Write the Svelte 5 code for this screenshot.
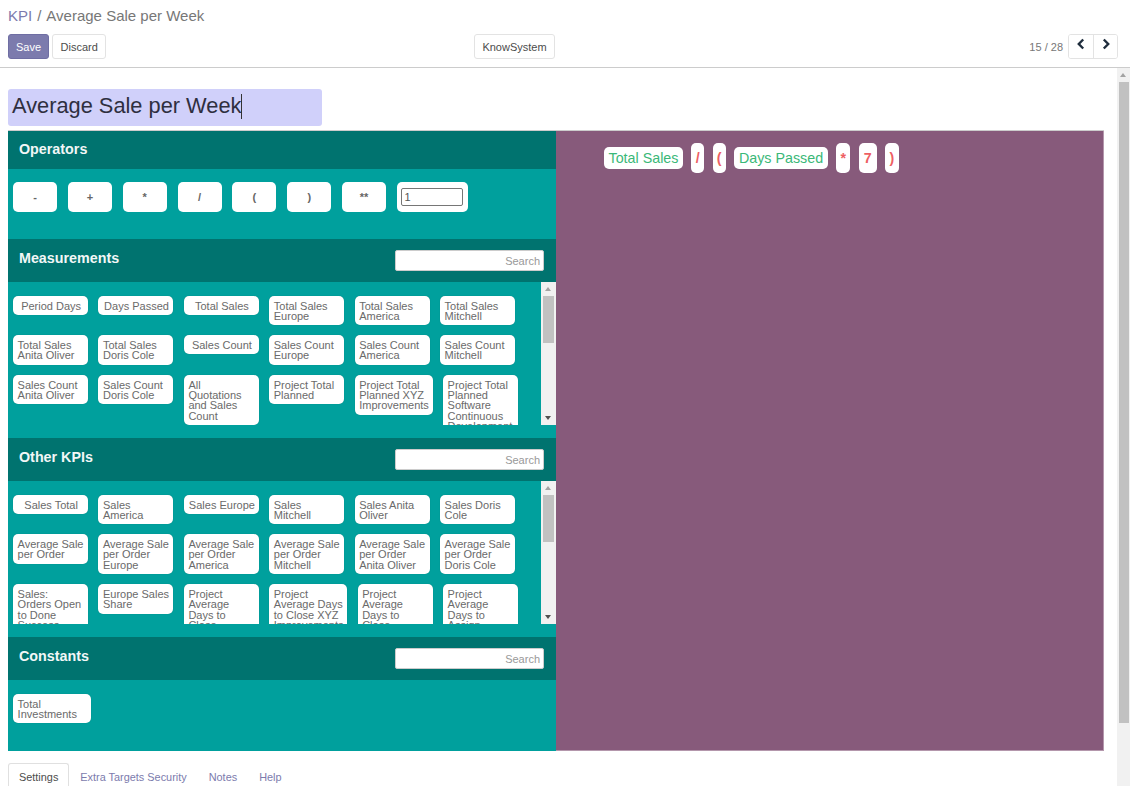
<script>
  const operators = ['-', '+', '*', '/', '(', ')', '**'];

  // wide = chip stretched by a long word in the original
  const measurements = [
    { t: 'Period Days' }, { t: 'Days Passed' }, { t: 'Total Sales' },
    { t: 'Total Sales Europe' }, { t: 'Total Sales America' }, { t: 'Total Sales Mitchell' },
    { t: 'Total Sales Anita Oliver' }, { t: 'Total Sales Doris Cole' }, { t: 'Sales Count' },
    { t: 'Sales Count Europe' }, { t: 'Sales Count America' }, { t: 'Sales Count Mitchell' },
    { t: 'Sales Count Anita Oliver' }, { t: 'Sales Count Doris Cole' }, { t: 'All Quotations and Sales Count' },
    { t: 'Project Total Planned' }, { t: 'Project Total Planned XYZ Improvements', wide: true },
    { t: 'Project Total Planned Software Continuous Development' }
  ];

  const otherKpis = [
    { t: 'Sales Total' }, { t: 'Sales America' }, { t: 'Sales Europe' },
    { t: 'Sales Mitchell' }, { t: 'Sales Anita Oliver' }, { t: 'Sales Doris Cole' },
    { t: 'Average Sale per Order' }, { t: 'Average Sale per Order Europe' }, { t: 'Average Sale per Order America' },
    { t: 'Average Sale per Order Mitchell' }, { t: 'Average Sale per Order Anita Oliver' }, { t: 'Average Sale per Order Doris Cole' },
    { t: 'Sales: Orders Open to Done Success' }, { t: 'Europe Sales Share' }, { t: 'Project Average Days to Close' },
    { t: 'Project Average Days to Close XYZ Improvements', wide: true },
    { t: 'Project Average Days to Close Software' }, { t: 'Project Average Days to Assign' }
  ];

  const formula = [
    { t: 'Total Sales', kind: 'operand' },
    { t: '/', kind: 'op' },
    { t: '(', kind: 'op' },
    { t: 'Days Passed', kind: 'operand' },
    { t: '*', kind: 'op' },
    { t: '7', kind: 'op num' },
    { t: ')', kind: 'op' }
  ];

  const tabs = ['Settings', 'Extra Targets Security', 'Notes', 'Help'];
</script>

{#snippet scrollbar(cls)}
  <div class="sbar {cls}">
    <i class="arrow up"></i>
    <div class="thumb"></div>
    <i class="arrow down"></i>
  </div>
{/snippet}

{#snippet chips(list)}
  <div class="list">
    <div class="chips">
      {#each list as c}
        <div class="chip" class:wide={c.wide}><span>{c.t}</span></div>
      {/each}
    </div>
    {@render scrollbar('small')}
  </div>
{/snippet}

<div class="page">
  <header class="control">
    <div class="crumbs"><a href="#kpi">KPI</a><span class="sep">/</span><span>Average Sale per Week</span></div>
    <div class="actions">
      <div class="left">
        <button class="btn primary">Save</button>
        <button class="btn">Discard</button>
      </div>
      <button class="btn know">KnowSystem</button>
      <div class="pager">
        <span class="count">15 / 28</span>
        <div class="pager-btns">
          <button aria-label="Previous">
            <svg width="10" height="12" viewBox="0 0 10 12"><path d="M7.2 1.5 2.8 6l4.4 4.5" fill="none" stroke="#1f2d3d" stroke-width="2.4" /></svg>
          </button>
          <button aria-label="Next">
            <svg width="10" height="12" viewBox="0 0 10 12"><path d="M2.8 1.5 7.2 6l-4.4 4.5" fill="none" stroke="#1f2d3d" stroke-width="2.4" /></svg>
          </button>
        </div>
      </div>
    </div>
  </header>

  <div class="body">
    <main class="content">
      <div class="title">Average Sale per Week<i class="caret"></i></div>

      <div class="panel">
        <div class="palette">
          <section>
            <div class="head short"><h4>Operators</h4></div>
            <div class="ops">
              {#each operators as op}
                <div class="op-btn">{op}</div>
              {/each}
              <div class="op-input"><input type="text" value="1" /></div>
            </div>
          </section>

          <section>
            <div class="head">
              <h4>Measurements</h4>
              <input class="search" type="text" placeholder="Search" />
            </div>
            {@render chips(measurements)}
          </section>

          <section>
            <div class="head">
              <h4>Other KPIs</h4>
              <input class="search" type="text" placeholder="Search" />
            </div>
            {@render chips(otherKpis)}
          </section>

          <section>
            <div class="head">
              <h4>Constants</h4>
              <input class="search" type="text" placeholder="Search" />
            </div>
            <div class="constants">
              <div class="chip wide"><span>Total Investments</span></div>
            </div>
          </section>
        </div>

        <div class="formula">
          {#each formula as f}
            <div class="token {f.kind}">{f.t}</div>
          {/each}
        </div>
      </div>

      <nav class="tabs">
        {#each tabs as tab, i}
          <div class="tab" class:active={i === 0}>{tab}</div>
        {/each}
      </nav>
    </main>
    {@render scrollbar('large')}
  </div>
</div>

<style>
  :global(body) {
    margin: 0;
    overflow: hidden;
    background: #fff;
  }
  .page {
    width: 1130px;
    height: 786px;
    display: flex;
    flex-direction: column;
    overflow: hidden;
    font-family: "Liberation Sans", Arial, sans-serif;
    font-size: 10.9px;
    color: #4c4c4c;
  }

  /* control panel */
  .control {
    flex: none;
    height: 68px;
    box-sizing: border-box;
    padding: 7px 12px 0 8px;
    border-bottom: 1px solid #ccc;
  }
  .crumbs {
    font-size: 15px;
    line-height: 18px;
    color: #777;
  }
  .crumbs a {
    color: #7c7bad;
    text-decoration: none;
  }
  .sep {
    margin: 0 5px;
  }
  .actions {
    margin-top: 9px;
    display: grid;
    grid-template-columns: 466px 81px 1fr;
    align-items: center;
  }
  .left {
    display: flex;
    gap: 3px;
  }
  .btn {
    height: 25px;
    box-sizing: border-box;
    padding: 0 7.5px;
    border: 1px solid #e3e3e3;
    border-radius: 3px;
    background: #fff;
    color: #4c4c4c;
    font: 11px "Liberation Sans", Arial, sans-serif;
  }
  .btn.primary {
    background: #7c7bad;
    border-color: #6f6ea3;
    color: #fff;
    width: 41px;
    padding: 0;
  }
  .btn.know {
    padding: 0;
  }
  .pager {
    display: flex;
    align-items: center;
    justify-content: flex-end;
    gap: 5px;
  }
  .count {
    color: #777;
    font-size: 11px;
  }
  .pager-btns {
    display: flex;
    height: 25px;
    border: 1px solid #e3e3e3;
    box-sizing: border-box;
    border-radius: 3px;
    overflow: hidden;
  }
  .pager-btns button {
    width: 24px;
    padding: 0 0 3px;
    border: 0;
    background: #fff;
  }
  .pager-btns button + button {
    border-left: 1px solid #e3e3e3;
  }

  /* scroll area */
  .body {
    flex: 1;
    min-height: 0;
    display: flex;
  }
  .content {
    flex: 1;
    min-width: 0;
    padding: 21px 13px 0 8px;
  }
  .title {
    width: 314px;
    height: 37px;
    box-sizing: border-box;
    padding: 0 0 3px 4px;
    background: #d0d0fa;
    border-radius: 3px;
    font-size: 21.8px;
    line-height: 30px;
    color: #2f2f3f;
    display: flex;
    align-items: center;
  }
  .caret {
    width: 1px;
    height: 25px;
    background: #333;
  }
  .panel {
    margin-top: 4px;
    display: grid;
    grid-template-columns: 548px 548px;
    height: 621px;
    border-top: 1px solid #ccc;
    box-sizing: border-box;
  }

  /* left column */
  .palette {
    background: #00a09d;
    display: flex;
    flex-direction: column;
  }
  .head {
    height: 43px;
    box-sizing: border-box;
    padding: 9px 12px 0 11px;
    background: #00736f;
    display: flex;
    justify-content: space-between;
    align-items: flex-start;
  }
  .head.short {
    height: 38px;
    padding-top: 8px;
  }
  h4 {
    margin: 0;
    font-size: 14.3px;
    line-height: 20px;
    font-weight: bold;
    color: #f2f7f7;
  }
  .search {
    width: 149px;
    height: 21px;
    margin-top: 2px;
    box-sizing: border-box;
    padding: 0 3px;
    border: 1px solid #ccc;
    border-radius: 2px;
    text-align: right;
    font: 11px "Liberation Sans", Arial, sans-serif;
  }
  .search::placeholder {
    color: #999;
    opacity: 1;
  }
  .ops {
    height: 70px;
    box-sizing: border-box;
    padding: 13.4px 0 0 5px;
    display: flex;
    gap: 10.85px;
    align-items: flex-start;
  }
  .op-btn {
    width: 44px;
    height: 29.5px;
    background: #fff;
    border-radius: 5px;
    display: flex;
    align-items: center;
    justify-content: center;
    color: #666;
    font-size: 11px;
    font-weight: bold;
  }
  .op-input {
    width: 71px;
    height: 29.5px;
    box-sizing: border-box;
    padding: 6px 4.5px;
    background: #fff;
    border-radius: 5px;
  }
  .op-input input {
    display: block;
    width: 62px;
    height: 17.5px;
    box-sizing: border-box;
    padding: 0 2px;
    border: 1px solid #767676;
    border-radius: 2px;
    font: 11px "Liberation Sans", Arial, sans-serif;
    color: #555;
  }
  .list {
    height: 143px;
    margin-bottom: 13px;
    display: flex;
  }
  .chips {
    flex: 1;
    min-width: 0;
    overflow: hidden;
    padding: 13.5px 0 0 5px;
    display: flex;
    flex-wrap: wrap;
    align-items: flex-start;
    align-content: flex-start;
    gap: 10px 10.4px;
  }
  .chip {
    width: 75px;
    box-sizing: border-box;
    padding: 5px 3.4px 4px 4.6px;
    background: #fff;
    border-radius: 5px;
    box-shadow: 0 0 1px rgba(0, 0, 0, .25);
    font-size: 11px;
    line-height: 10.3px;
    color: #6a6a6a;
    display: flex;
    justify-content: center;
  }
  .chip.wide {
    width: 78px;
  }
  .constants {
    padding: 13.5px 0 0 5px;
    display: flex;
  }

  /* right column */
  .formula {
    height: 620px;
    box-sizing: border-box;
    padding: 12px 0 0 48px;
    background: #875a7b;
    border-right: 1px solid #b497ac;
    border-bottom: 1px solid #b497ac;
    display: flex;
    align-items: flex-start;
    gap: 8.5px;
  }
  .token {
    background: #fff;
    border-radius: 5px;
    font-size: 14.3px;
    display: flex;
    align-items: center;
    justify-content: center;
  }
  .token.operand {
    margin-top: 3.5px;
    height: 22.5px;
    padding: 0 4.5px;
    color: #3ab878;
  }
  .token.op {
    height: 29.5px;
    padding: 0 4.3px;
    color: #ee5f63;
    font-weight: bold;
  }
  .token.num {
    padding: 0 5px;
  }

  /* tabs */
  .tabs {
    margin-top: 12px;
    display: flex;
    color: #7c7bad;
  }
  .tab {
    padding: 7px 10px 5px;
    height: 30px;
    box-sizing: border-box;
    white-space: nowrap;
    border: 1px solid transparent;
    border-bottom: 0;
  }
  .tab.active {
    border-color: #e0e0e0;
    border-radius: 3px 3px 0 0;
    color: #4c4c4c;
  }

  /* fake classic scrollbars */
  .sbar {
    flex: none;
    background: #f1f1f1;
    position: relative;
    box-sizing: border-box;
  }
  .sbar.small {
    width: 15px;
    padding-top: 14px;
  }
  .sbar.large {
    width: 13px;
    padding: 14px 1px 0 2px;
  }
  .sbar.small .thumb {
    height: 47px;
    margin: 0 2px;
    background: #c1c1c1;
  }
  .sbar.large .thumb {
    height: 641px;
    background: #c1c1c1;
  }
  .arrow {
    position: absolute;
    left: 50%;
    margin-left: -3.5px;
    width: 0;
    height: 0;
    border-left: 3.5px solid transparent;
    border-right: 3.5px solid transparent;
  }
  .arrow.up {
    top: 5px;
    border-bottom: 4px solid #a3a3a3;
  }
  .arrow.down {
    bottom: 5px;
    border-top: 4px solid #505050;
  }
  .sbar.large .arrow.down {
    display: none;
  }
</style>
